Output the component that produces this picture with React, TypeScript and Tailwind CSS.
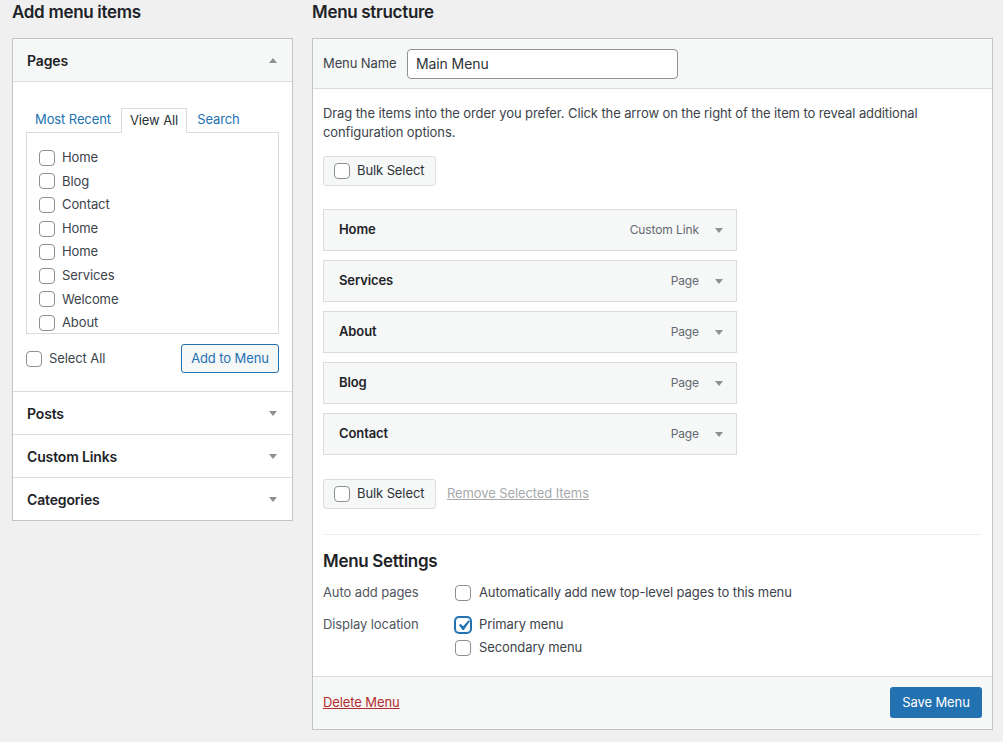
import React from "react";

function Checkbox({ checked = false }: { checked?: boolean }) {
  return (
    <span
      className={
        "flex h-4 w-4 shrink-0 items-center justify-center rounded-[4px] border bg-white " +
        (checked ? "border-[#2271b1] shadow-[0_0_0_1px_#2271b1]" : "border-[#8c8f94]")
      }
    >
      {checked ? (
        <svg viewBox="0 0 20 20" className="h-[21px] w-[21px] shrink-0" fill="#2271b1">
          <path d="M14.83 4.89l1.34.94-5.81 8.38H9.02L5.78 9.67l1.34-1.25 2.57 2.4z" />
        </svg>
      ) : null}
    </span>
  );
}

function Triangle({ up = false }: { up?: boolean }) {
  return (
    <svg viewBox="0 0 8 5" className="h-[5px] w-[8px]" fill="#8c8f94">
      {up ? <polygon points="0,5 8,5 4,0" /> : <polygon points="0,0 8,0 4,5" />}
    </svg>
  );
}

const pages = ["Home", "Blog", "Contact", "Home", "Home", "Services", "Welcome", "About"];

const menuItems = [
  { title: "Home", type: "Custom Link" },
  { title: "Services", type: "Page" },
  { title: "About", type: "Page" },
  { title: "Blog", type: "Page" },
  { title: "Contact", type: "Page" },
];

function BulkSelect() {
  return (
    <div className="flex h-[30px] w-[113px] items-center gap-[7px] rounded-[3px] border border-[#dcdcde] bg-[#f6f7f7] pl-[10px] text-[13px] text-[#2c3338]">
      <Checkbox />
      <span>Bulk Select</span>
    </div>
  );
}

function AccordionHeader({ title, open = false }: { title: string; open?: boolean }) {
  return (
    <div
      className={
        "flex h-[43px] items-center justify-between border-b border-[#dcdcde] pl-[14px] pr-[15px] " +
        (open ? "bg-[#f6f7f7]" : "bg-white")
      }
    >
      <span className="text-[14px] font-semibold tracking-[-0.15px] text-[#1d2327]">{title}</span>
      <Triangle up={open} />
    </div>
  );
}

export default function App() {
  return (
    <div className="min-h-screen bg-[#f0f0f1] pl-[12px] tracking-[-0.1px] text-[#3c434a] [font-family:Inter,sans-serif]">
      <div className="flex gap-[19px]">
        {/* left column */}
        <div className="w-[281px] shrink-0">
          <h2 className="mb-[14px] text-[17px] leading-[24px] font-semibold tracking-[-0.3px] text-[#1d2327]">
            Add menu items
          </h2>
          <div className="border-x border-t border-[#c3c4c7] bg-white">
            <AccordionHeader title="Pages" open />
            <div className="border-b border-[#dcdcde] px-[13px] pt-[26px] pb-[18px]">
              <div className="flex h-[24px] items-stretch gap-[2px] pl-[1px] text-[13px]">
                <span className="flex items-center px-[8px] text-[#2271b1]">Most Recent</span>
                <span className="relative z-10 -mb-px flex items-center border-x border-t border-[#dcdcde] bg-white px-[8px] text-[#2c3338]">
                  View All
                </span>
                <span className="flex items-center px-[8px] text-[#2271b1]">Search</span>
              </div>
              <div className="h-[202px] overflow-hidden border border-[#dcdcde] pt-[13px] pl-[12px]">
                {pages.map((p, i) => (
                  <div key={i} className="flex h-[23.6px] items-center gap-[7px] text-[13px] text-[#3c434a]">
                    <Checkbox />
                    <span>{p}</span>
                  </div>
                ))}
              </div>
              <div className="mt-[10px] flex items-center justify-between">
                <div className="flex items-center gap-[7px] text-[13px]">
                  <Checkbox />
                  <span>Select All</span>
                </div>
                <button className="h-[29px] w-[98px] rounded-[3px] border border-[#2271b1] bg-[#f6f7f7] text-[13px] text-[#2271b1]">
                  Add to Menu
                </button>
              </div>
            </div>
            <AccordionHeader title="Posts" />
            <AccordionHeader title="Custom Links" />
            <div className="border-b border-[#c3c4c7]">
              <div className="flex h-[42px] items-center justify-between pl-[14px] pr-[15px]">
                <span className="text-[14px] font-semibold tracking-[-0.15px] text-[#1d2327]">Categories</span>
                <Triangle />
              </div>
            </div>
          </div>
        </div>

        {/* right column */}
        <div className="w-[681px] shrink-0">
          <h2 className="mb-[14px] text-[17px] leading-[24px] font-semibold tracking-[-0.3px] text-[#1d2327]">
            Menu structure
          </h2>
          <div className="border border-[#c3c4c7] bg-white">
            <div className="flex h-[50px] items-center gap-[12px] border-b border-[#dcdcde] bg-[#f6f7f7] px-[10px]">
              <span className="w-[72px] text-[13px] whitespace-nowrap text-[#3c434a]">Menu Name</span>
              <div className="flex h-[30px] w-[271px] items-center rounded-[4px] border border-[#8c8f94] bg-white px-[8px] text-[14px] text-[#2c3338]">
                Main Menu
              </div>
            </div>

            <div className="px-[10px] pt-[15px] pb-[17px]">
              <p className="text-[13px] leading-[19px] text-[#3c434a]">
                Drag the items into the order you prefer. Click the arrow on the right of the item to reveal additional
                <br />
                configuration options.
              </p>
              <div className="mt-[14px]">
                <BulkSelect />
              </div>

              <div className="mt-[23px] flex w-[414px] flex-col gap-[9px]">
                {menuItems.map((m) => (
                  <div
                    key={m.title}
                    className="flex h-[42px] items-center justify-between border border-[#dcdcde] bg-[#f6f7f7] pl-[15px] pr-[13px]"
                  >
                    <span className="text-[13px] font-semibold text-[#1d2327]">{m.title}</span>
                    <div className="flex items-center gap-[16px]">
                      <span className="text-[12px] text-[#646970]">{m.type}</span>
                      <Triangle />
                    </div>
                  </div>
                ))}
              </div>

              <div className="mt-[24px] flex items-center gap-[11px]">
                <BulkSelect />
                <span className="text-[13px] text-[#a7aaad] underline">Remove Selected Items</span>
              </div>

              <div className="mt-[25px] border-t border-[#f0f0f1]" />

              <h3 className="mt-[14px] text-[17px] leading-[24px] font-semibold tracking-[-0.3px] text-[#1d2327]">
                Menu Settings
              </h3>

              <div className="mt-[9px] grid grid-cols-[132px_1fr] text-[13px]">
                <div className="flex h-[22px] items-center text-[#50575e]">Auto add pages</div>
                <div className="flex h-[22px] items-center gap-[8px] text-[#3c434a]">
                  <Checkbox />
                  <span>Automatically add new top-level pages to this menu</span>
                </div>
                <div className="mt-[10px] flex h-[22px] items-center text-[#50575e]">Display location</div>
                <div className="mt-[10px] flex flex-col">
                  <div className="flex h-[22px] items-center gap-[8px] text-[#3c434a]">
                    <Checkbox checked />
                    <span>Primary menu</span>
                  </div>
                  <div className="mt-px flex h-[22px] items-center gap-[8px] text-[#3c434a]">
                    <Checkbox />
                    <span>Secondary menu</span>
                  </div>
                </div>
              </div>
            </div>

            <div className="flex items-center justify-between border-t border-[#dcdcde] bg-[#f6f7f7] px-[10px] pt-[10px] pb-[11px]">
              <span className="text-[13px] text-[#b32d2e] underline">Delete Menu</span>
              <button className="h-[31px] w-[92px] rounded-[3px] bg-[#2271b1] text-[13px] text-white">Save Menu</button>
            </div>
          </div>
        </div>
      </div>
    </div>
  );
}
